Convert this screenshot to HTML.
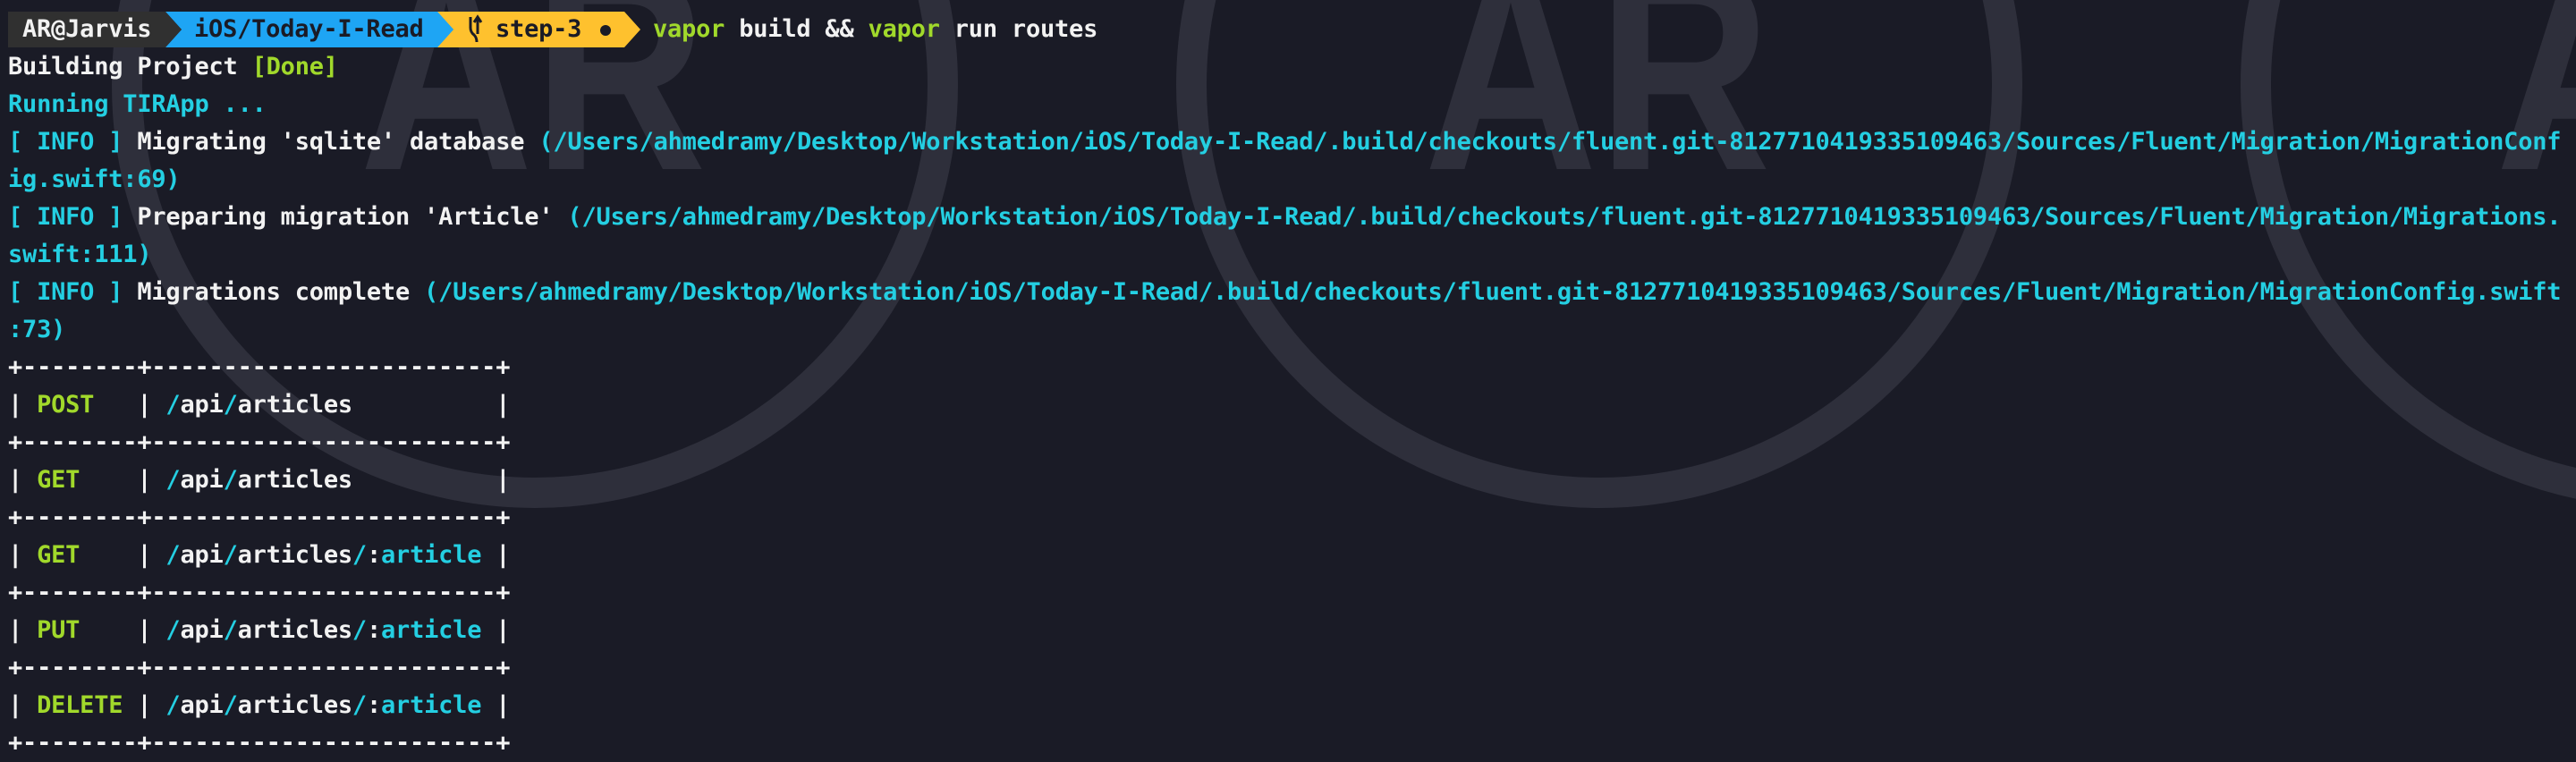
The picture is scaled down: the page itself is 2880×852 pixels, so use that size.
<!DOCTYPE html>
<html><head><meta charset="utf-8"><style>
html,body{margin:0;padding:0;}
body{width:2880px;height:836px;background:#1a1b26;overflow:hidden;position:relative;font-family:"DejaVu Sans Mono","Liberation Mono",monospace;}
svg.bg{position:absolute;left:0;top:0;}
pre{position:absolute;left:9px;top:54px;margin:0;font-size:27px;line-height:42px;color:#f2f2f2;font-weight:bold;font-family:"DejaVu Sans Mono","Liberation Mono",monospace;letter-spacing:-0.22px;}
.g{color:#a1d92b}.c{color:#24cfe2}
.seg{position:absolute;top:13px;height:40px;font-size:27px;line-height:40px;white-space:pre;font-weight:bold;letter-spacing:-0.22px;}
</style></head><body>
<svg class="bg" width="2880" height="836">
<g fill="none" stroke="#2e2f3b" stroke-width="34">
<circle cx="598" cy="95" r="456"/>
<circle cx="1788" cy="95" r="456"/>
<circle cx="2978" cy="95" r="456"/>
</g>
<g fill="#2e2f3b" font-family="Liberation Sans, sans-serif" font-weight="bold" font-size="320">
<text x="402" y="189" textLength="388" lengthAdjust="spacingAndGlyphs">AR</text>
<text x="1592" y="189" textLength="388" lengthAdjust="spacingAndGlyphs">AR</text>
<text x="2790" y="189" textLength="200" lengthAdjust="spacingAndGlyphs">A</text>
</g>
<rect x="9" y="13" width="180" height="40" fill="#303030"/>
<polygon points="185,13 491,13 509,33 491,53 185,53 203,33" fill="#1ea5f4"/>
<polygon points="185,13 203,33 185,53" fill="#303030"/>
<polygon points="489,13 698,13 716,33 698,53 489,53 507,33" fill="#fec12e"/>
<polygon points="489,13 507,33 489,53" fill="#1ea5f4"/>
<g stroke="#1a1b26" stroke-width="3" fill="none">
<path d="M526 19 V31 Q526 36 530 39 Q533 42 533 47"/>
<path d="M534 20 V38"/>
<path d="M530 25 L534 19 L538 25"/>
</g>
<circle cx="677" cy="34" r="6" fill="#1a1b26"/>
</svg>
<div class="seg" style="left:25px;color:#f2f2f2">AR@Jarvis</div>
<div class="seg" style="left:217px;color:#1a1b26">iOS/Today-I-Read</div>
<div class="seg" style="left:554px;color:#1a1b26">step-3</div>
<div class="seg" style="left:730px;color:#f2f2f2"><span class="g">vapor</span> build &amp;&amp; <span class="g">vapor</span> run routes</div>
<pre>Building Project <span class="g">[Done]</span>
<span class="c">Running TIRApp ...</span>
<span class="c">[ INFO ]</span> Migrating 'sqlite' database <span class="c">(/Users/ahmedramy/Desktop/Workstation/iOS/Today-I-Read/.build/checkouts/fluent.git-8127710419335109463/Sources/Fluent/Migration/MigrationConf</span>
<span class="c">ig.swift:69)</span>
<span class="c">[ INFO ]</span> Preparing migration 'Article' <span class="c">(/Users/ahmedramy/Desktop/Workstation/iOS/Today-I-Read/.build/checkouts/fluent.git-8127710419335109463/Sources/Fluent/Migration/Migrations.</span>
<span class="c">swift:111)</span>
<span class="c">[ INFO ]</span> Migrations complete <span class="c">(/Users/ahmedramy/Desktop/Workstation/iOS/Today-I-Read/.build/checkouts/fluent.git-8127710419335109463/Sources/Fluent/Migration/MigrationConfig.swift</span>
<span class="c">:73)</span>
+--------+------------------------+
| <span class="g">POST</span>   | <span class="c">/</span>api<span class="c">/</span>articles          |
+--------+------------------------+
| <span class="g">GET</span>    | <span class="c">/</span>api<span class="c">/</span>articles          |
+--------+------------------------+
| <span class="g">GET</span>    | <span class="c">/</span>api<span class="c">/</span>articles<span class="c">/</span>:<span class="c">article</span> |
+--------+------------------------+
| <span class="g">PUT</span>    | <span class="c">/</span>api<span class="c">/</span>articles<span class="c">/</span>:<span class="c">article</span> |
+--------+------------------------+
| <span class="g">DELETE</span> | <span class="c">/</span>api<span class="c">/</span>articles<span class="c">/</span>:<span class="c">article</span> |
+--------+------------------------+</pre>
</body></html>
